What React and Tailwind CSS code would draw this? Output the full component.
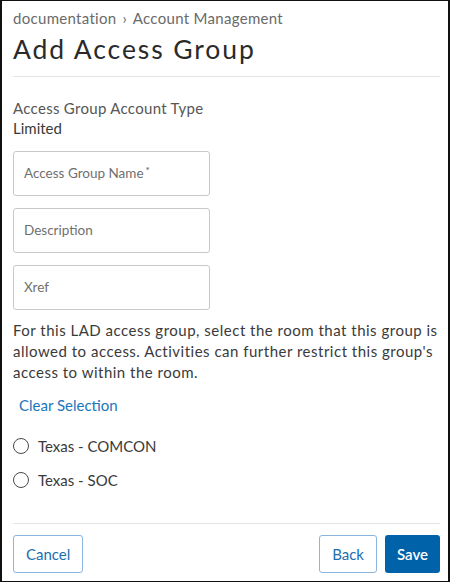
import React from 'react';

const Field = ({ label, required }) => (
  <div className="w-[197px] h-[45px] border border-[#c9c9c9] rounded-[3px] flex items-center px-[10px] text-[13.5px] text-[#6f6f6f]">
    {label}
    {required && <span className="text-[10px] text-[#555] self-start mt-[11px] ml-[2px]">*</span>}
  </div>
);

const Radio = ({ label }) => (
  <label className="flex items-center gap-[9px] h-[34px]">
    <span className="w-[16px] h-[16px] rounded-full border-[1.5px] border-[#4a4a4a] bg-white" />
    <span className="text-[15px] text-[#3a3a3a]">{label}</span>
  </label>
);

const App = () => {
  return (
    <div className="w-[450px] h-[582px] bg-white border-x-2 border-y border-[#111] flex flex-col pl-[11px] pr-[8px] font-['Lato','Liberation_Sans',sans-serif]">
      <div className="pt-[7px] text-[15px] text-[#6a6a6a] leading-[20px] tracking-[0.3px]">
        documentation <span className="mx-[2px]">›</span> Account Management
      </div>
      <h1 className="text-[26.5px] text-[#2a2a2a] leading-[30px] mt-[6px] tracking-[1.9px]">Add Access Group</h1>
      <div className="h-[1px] bg-[#e3e3e3] mt-[12px]" />

      <div className="mt-[21px] text-[15px] leading-[20px] text-[#565656] tracking-[0.3px]">Access Group Account Type</div>
      <div className="text-[15px] leading-[20px] text-[#3a3a3a]">Limited</div>

      <div className="flex flex-col gap-[12px] mt-[13px]">
        <Field label="Access Group Name" required />
        <Field label="Description" />
        <Field label="Xref" />
      </div>

      <p className="mt-[10px] text-[15px] leading-[21px] text-[#3a3a3a] tracking-[0.5px]">
        For this LAD access group, select the room that this group is allowed to access. Activities can further restrict this group's access to within the room.
      </p>

      <button className="self-start ml-[6px] mt-[12px] text-[15px] text-[#1b75bb] leading-[20px]">Clear Selection</button>

      <div className="mt-[14px] flex flex-col">
        <Radio label="Texas - COMCON" />
        <Radio label="Texas - SOC" />
      </div>

      <div className="h-[1px] bg-[#e3e3e3] mt-[26px]" />

      <div className="flex items-center mt-[11px]">
        <button className="h-[38px] px-[12px] border border-[#8ab6dd] rounded-[3px] text-[15px] text-[#1b6fb0]">Cancel</button>
        <div className="flex-1" />
        <button className="h-[38px] px-[12px] border border-[#8ab6dd] rounded-[3px] text-[15px] text-[#1b6fb0]">Back</button>
        <button className="ml-[8px] h-[38px] px-[12px] bg-[#0063a9] rounded-[3px] text-[15px] text-white font-semibold">Save</button>
      </div>
    </div>
  );
};

export default App;
